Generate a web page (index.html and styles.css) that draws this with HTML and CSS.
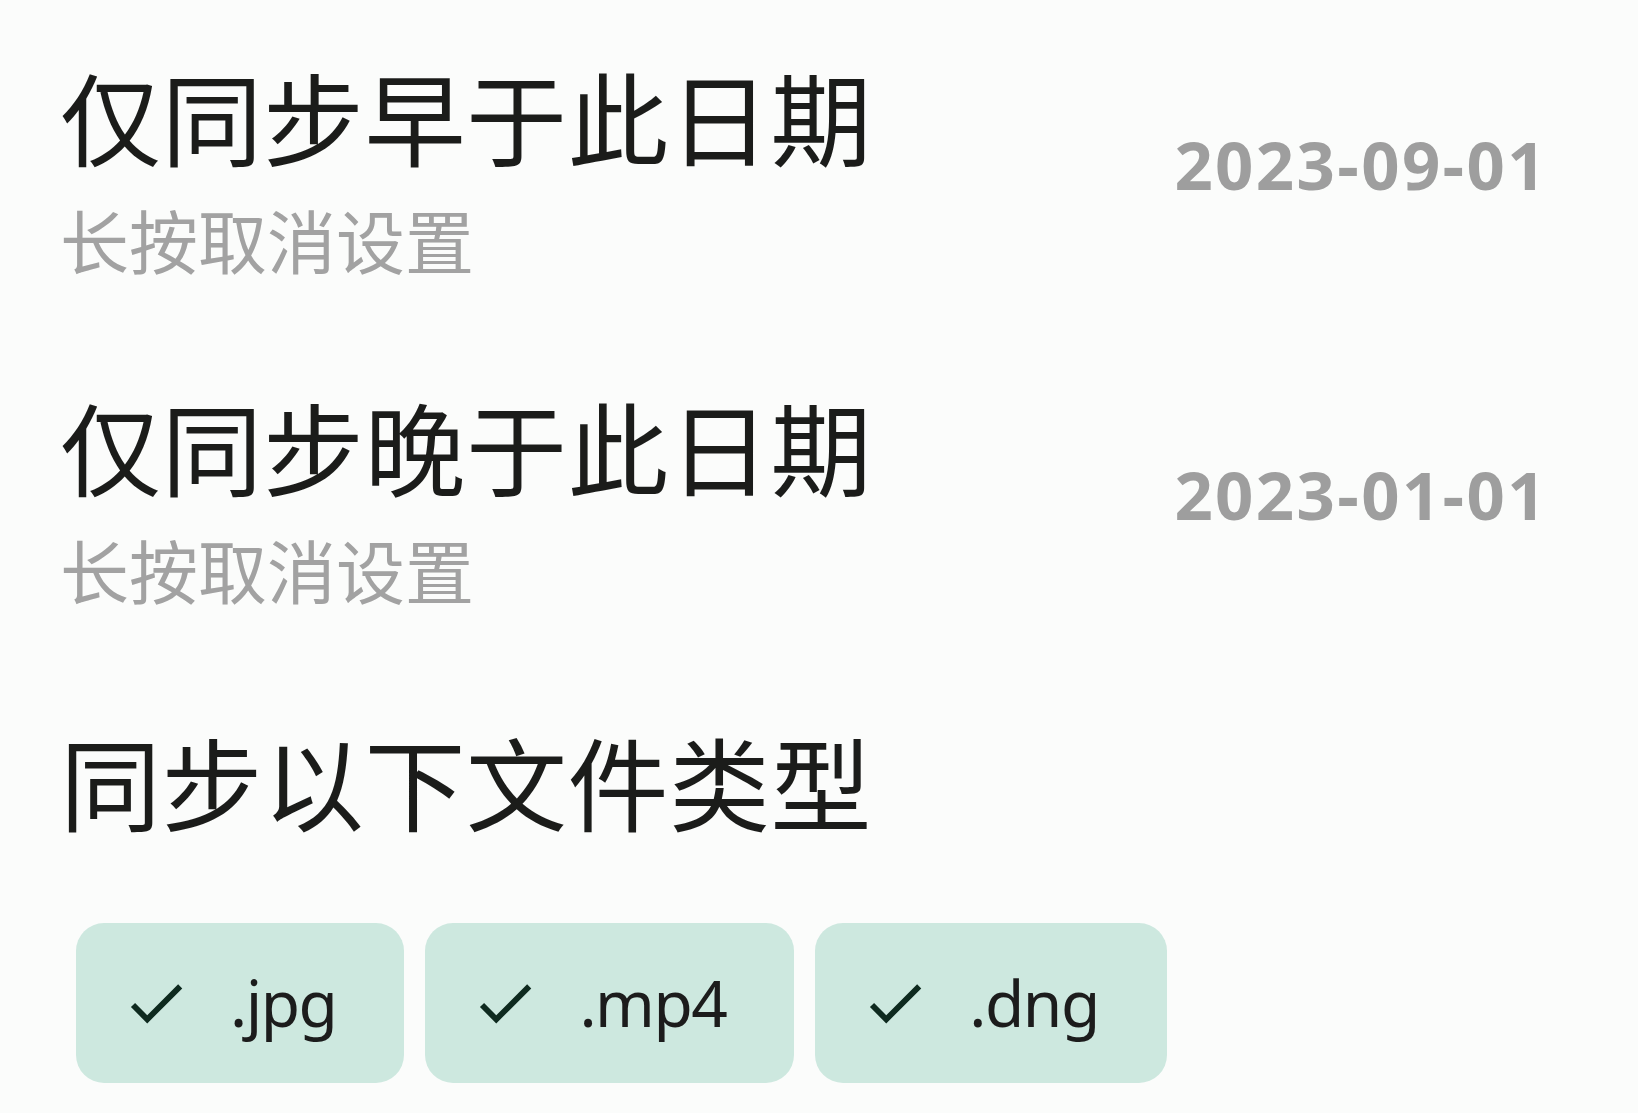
FILE: index.html
```html
<!DOCTYPE html>
<html lang="zh-CN">
<head>
<meta charset="utf-8">
<title>同步设置</title>
<link rel="stylesheet" href="styles.css">
</head>
<body>
<main class="settings">
  <section class="row row-first">
    <div class="texts">
      <div class="title">仅同步早于此日期</div>
      <div class="summary">长按取消设置</div>
    </div>
    <div class="value">2023-09-01</div>
  </section>
  <section class="row">
    <div class="texts">
      <div class="title">仅同步晚于此日期</div>
      <div class="summary">长按取消设置</div>
    </div>
    <div class="value">2023-01-01</div>
  </section>
  <section class="types">
    <div class="title">同步以下文件类型</div>
    <div class="chips">
      <div class="chip">
        <svg class="check" viewBox="0 0 24 24"><path d="M9 16.17L4.83 12l-1.42 1.41L9 19 21 7l-1.41-1.41z"/></svg>
        <span class="chip-label">.jpg</span>
      </div>
      <div class="chip">
        <svg class="check" viewBox="0 0 24 24"><path d="M9 16.17L4.83 12l-1.42 1.41L9 19 21 7l-1.41-1.41z"/></svg>
        <span class="chip-label">.mp4</span>
      </div>
      <div class="chip">
        <svg class="check" viewBox="0 0 24 24"><path d="M9 16.17L4.83 12l-1.42 1.41L9 19 21 7l-1.41-1.41z"/></svg>
        <span class="chip-label">.dng</span>
      </div>
    </div>
  </section>
</main>
</body>
</html>
```
FILE: styles.css
```css
html, body {
  margin: 0;
  padding: 0;
  background: #fbfcfb;
}

body {
  font-family: "Noto Sans", "Noto Sans CJK SC", sans-serif;
  overflow: hidden;
}

.settings {
  display: flex;
  flex-direction: column;
  padding: 0 90px 0 60px;
}

.row {
  display: flex;
  justify-content: space-between;
  align-items: center;
  margin-top: 98px;
}

.row-first {
  margin-top: 55px;
}

.texts {
  display: flex;
  flex-direction: column;
}

.title {
  font-family: "Noto Sans CJK SC", sans-serif;
  font-size: 101px;
  letter-spacing: 0.5px;
  line-height: 120px;
  color: #1b1c1a;
}

.summary {
  font-family: "Noto Sans CJK SC", sans-serif;
  font-size: 69px;
  line-height: 96px;
  margin-top: 16px;
  color: #a2a2a2;
}

.value {
  font-family: "Open Sans", sans-serif;
  font-weight: 700;
  font-size: 67px;
  letter-spacing: 2.4px;
  line-height: 90px;
  color: #9e9e9e;
  padding-bottom: 14px;
}

.types {
  display: flex;
  flex-direction: column;
  margin-top: 103px;
}

.chips {
  display: flex;
  gap: 21px;
  margin-top: 83px;
  margin-left: 16px;
}

.chip {
  display: flex;
  align-items: center;
  height: 160px;
  padding: 0 68px 0 45px;
  background: #cde8df;
  border-radius: 28px;
  box-sizing: border-box;
}

.check {
  width: 70px;
  height: 70px;
  fill: #0e2a1f;
  flex: none;
}

.chip-label {
  margin-left: 39px;
  font-family: "Noto Sans", sans-serif;
  font-size: 64px;
  letter-spacing: -1.5px;
  line-height: 80px;
  color: #1c1c1c;
}
```
